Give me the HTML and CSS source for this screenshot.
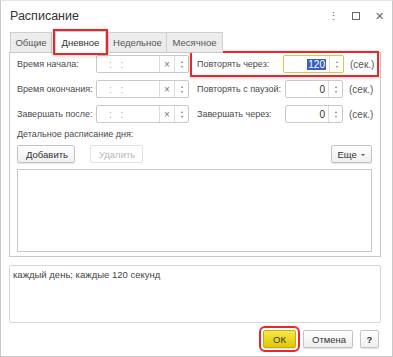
FILE: index.html
```html
<!DOCTYPE html>
<html lang="ru">
<head>
  <meta charset="UTF-8" />
  <title>Расписание</title>
  <link rel="stylesheet" href="styles.css">
</head>
<body>
  <div class="window">
    <div class="titlebar">
      <h1>Расписание</h1>
      <div class="win-icons">
        <span class="wi">⋮</span>
        <span class="wi wi-max"></span>
        <span class="wi">✕</span>
      </div>
    </div>

    <div class="tabs">
      <div class="tab t1">Общие</div>
      <div class="tab t2 active mark">Дневное</div>
      <div class="tab t3">Недельное</div>
      <div class="tab t4">Месячное</div>
    </div>

    <div class="panel">
      <div class="form">
        <div class="col">
          <div class="row">
            <label>Время начала:</label>
            <div class="field time">
              <span class="val">: :</span>
              <span class="clear">×</span>
              <span class="spin"><i class="up"></i><i class="dn"></i></span>
            </div>
          </div>
          <div class="row">
            <label>Время окончания:</label>
            <div class="field time">
              <span class="val">: :</span>
              <span class="clear">×</span>
              <span class="spin"><i class="up"></i><i class="dn"></i></span>
            </div>
          </div>
          <div class="row">
            <label>Завершать после:</label>
            <div class="field time">
              <span class="val">: :</span>
              <span class="clear">×</span>
              <span class="spin"><i class="up"></i><i class="dn"></i></span>
            </div>
          </div>
        </div>
        <div class="col right">
          <div class="row mark">
            <label>Повторять через:</label>
            <div class="field num focus">
              <span class="val"><span class="sel">120</span></span>
              <span class="spin"><i class="up"></i><i class="dn"></i></span>
            </div>
            <span class="unit">(сек.)</span>
          </div>
          <div class="row">
            <label>Повторять с паузой:</label>
            <div class="field num">
              <span class="val">0</span>
              <span class="spin"><i class="up"></i><i class="dn"></i></span>
            </div>
            <span class="unit">(сек.)</span>
          </div>
          <div class="row">
            <label>Завершать через:</label>
            <div class="field num">
              <span class="val">0</span>
              <span class="spin"><i class="up"></i><i class="dn"></i></span>
            </div>
            <span class="unit">(сек.)</span>
          </div>
        </div>
      </div>

      <div class="caption">Детальное расписание дня:</div>
      <div class="toolbar">
        <button class="btn">Добавить</button>
        <button class="btn disabled">Удалить</button>
        <button class="btn more">Еще <span class="caret"></span></button>
      </div>
      <div class="grid-box"></div>
    </div>

    <div class="summary">каждый день; каждые 120 секунд</div>

    <div class="footer">
      <button class="btn ok mark">ОК</button>
      <button class="btn cancel">Отмена</button>
      <button class="btn help">?</button>
    </div>
  </div>
</body>
</html>
```
FILE: styles.css
```css
* {
  box-sizing: border-box;
}

body {
  margin: 0;
  background: #fff;
  font-family: "Liberation Sans", Arial, sans-serif;
  font-size: 9px;
  color: #4a4a4a;
}

.window {
  width: 393px;
  height: 357px;
  border: 1px solid #c8c8c8;
  border-top-color: #e4e4e4;
  padding: 0 11px 0 8px;
}

.titlebar {
  display: flex;
  align-items: center;
  justify-content: space-between;
  height: 30px;
  padding-left: 1px;
}

.titlebar h1 {
  margin: 0;
  font-size: 12.5px;
  font-weight: normal;
  color: #333;
}

.win-icons {
  display: flex;
  align-items: center;
  gap: 13px;
  margin-right: -3px;
  color: #666;
  font-size: 11px;
}

.wi {
  width: 10px;
  text-align: center;
}

.wi-max {
  width: 8px;
  height: 8px;
  border: 1px solid #666;
  margin: 0 1px;
}

.tabs {
  display: flex;
  height: 22px;
  align-items: flex-end;
  position: relative;
  z-index: 1;
  margin-bottom: -1px;
  padding-left: 1px;
}

.tab {
  height: 21px;
  display: flex;
  align-items: center;
  justify-content: center;
  border: 1px solid #cfcfcf;
  border-bottom-color: #c8c8c8;
  background: #ececec;
  color: #555;
  font-size: 9.5px;
  white-space: nowrap;
}

.t1 { width: 42px; }
.t2 { width: 51px; margin-left: 3px; }
.t3 { width: 59px; margin-left: 2px; }
.t4 { width: 57px; margin-left: -1px; }

.tab.active {
  height: 22px;
  background: #fff;
  border-bottom-color: #fff;
  color: #333;
}

.mark {
  outline: 2px solid #e8262c;
  outline-offset: 0;
  box-shadow: 0 1px 4px 2px rgba(0, 0, 0, 0.18);
}

.panel {
  border: 1px solid #c8c8c8;
  height: 205px;
  padding: 2px 8px 6px 7px;
}

.form {
  display: flex;
  gap: 3px;
}

.col {
  display: flex;
  flex-direction: column;
  gap: 7px;
}

.row {
  display: flex;
  align-items: center;
  height: 18px;
}

.col.right .row {
  padding-left: 5px;
  width: 185px;
}

.col.right .row.mark {
  height: 22px;
  margin: -2px 0;
}

.row label {
  width: 79px;
  white-space: nowrap;
}

.col.right label {
  width: 88px;
}

.field {
  display: flex;
  height: 18px;
  border: 1px solid #c9c9c9;
  border-radius: 2px;
  background: #fff;
}

.field.time {
  width: 93px;
}

.field.num {
  width: 58px;
}

.field.focus {
  border-color: #e8c33a;
  width: 61px;
  margin-left: -2px;
}

.val {
  flex: 1;
  display: flex;
  align-items: center;
  padding: 0 3px;
  color: #333;
  font-size: 10px;
}

.time .val {
  padding-left: 12px;
  color: #aaa;
  letter-spacing: 3px;
}

.num .val {
  justify-content: flex-end;
}

.sel {
  background: #3b5fbf;
  color: #fff;
  padding: 0 1px;
}

.clear {
  width: 15px;
  border-left: 1px solid #ddd;
  display: flex;
  align-items: center;
  justify-content: center;
  color: #777;
  font-size: 10px;
}

.spin {
  width: 14px;
  border-left: 1px solid #ddd;
  display: flex;
  flex-direction: column;
  align-items: center;
  justify-content: space-around;
  padding: 3px 0;
}

.spin i {
  width: 0;
  height: 0;
  border-left: 1.5px solid transparent;
  border-right: 1.5px solid transparent;
}

.spin .up {
  border-bottom: 2px solid #777;
}

.spin .dn {
  border-top: 2px solid #777;
}

.unit {
  margin-left: 6px;
  color: #555;
  font-size: 10px;
}

.caption {
  margin-top: 6px;
  height: 13px;
}

.toolbar {
  display: flex;
  gap: 15px;
  margin-top: 3px;
}

.btn {
  font-family: inherit;
  font-size: 9.5px;
  height: 18px;
  padding: 0 8px;
  border: 1px solid #c4c4c4;
  border-radius: 2px;
  background: linear-gradient(#fff, #efefef);
  color: #333;
  box-shadow: 0 1px 1px rgba(0, 0, 0, 0.12);
  white-space: nowrap;
  cursor: pointer;
}

.toolbar .btn {
  width: 58px;
}

.btn.disabled {
  width: 53px;
  color: #b5b5b5;
  border-color: #e0e0e0;
  box-shadow: none;
  background: #fff;
}

.btn.more {
  margin-left: auto;
  width: 41px;
  padding: 0 4px;
}

.caret {
  display: inline-block;
  width: 0;
  height: 0;
  border-left: 2px solid transparent;
  border-right: 2px solid transparent;
  border-top: 2px solid #555;
  vertical-align: middle;
  margin-left: 2px;
}

.grid-box {
  margin-top: 6px;
  height: 83px;
  border: 1px solid #c8c8c8;
}

.summary {
  margin-top: 8px;
  height: 58px;
  border: 1px solid #d6d6d6;
  border-radius: 2px;
  padding: 3px 3px;
  color: #444;
  font-size: 9.5px;
}

.footer {
  display: flex;
  justify-content: flex-end;
  gap: 7px;
  margin-top: 7px;
  margin-right: 2px;
}

.btn.ok {
  width: 33px;
  background: linear-gradient(#f7e64a, #e2c800);
  border-color: #c6ae10;
  color: #333;
  outline-offset: 2px;
}

.btn.cancel {
  width: 50px;
}

.btn.help {
  width: 19px;
  padding: 0;
  font-weight: bold;
}
```
